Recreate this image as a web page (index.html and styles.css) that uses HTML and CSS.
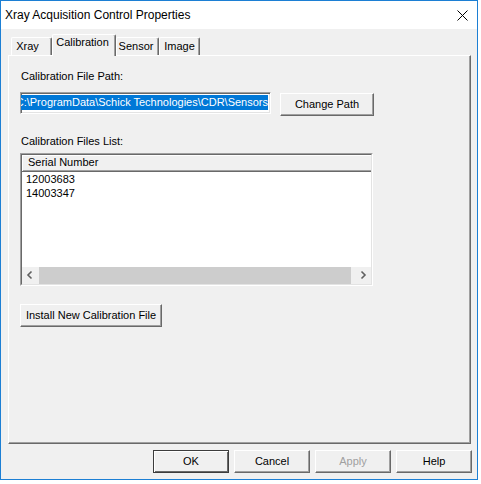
FILE: index.html
```html
<!DOCTYPE html>
<html>
<head>
<meta charset="utf-8">
<link rel="stylesheet" href="styles.css">
</head>
<body>
<div class="window">
  <div class="titlebar">
    <span class="title">Xray Acquisition Control Properties</span>
    <svg class="close" width="11" height="11" viewBox="0 0 11 11"><path d="M0.5 0.5 L10.5 10.5 M10.5 0.5 L0.5 10.5" stroke="#000" stroke-width="1" fill="none"/></svg>
  </div>
  <div class="client">
    <div class="tabs">
      <div class="tab t-xray">Xray</div>
      <div class="tab t-cal selected">Calibration</div>
      <div class="tab t-sensor">Sensor</div>
      <div class="tab t-image">Image</div>
    </div>
    <div class="panel">
      <div class="label">Calibration File Path:</div>
      <div class="pathrow">
        <div class="textbox"><span class="seltext">C:\ProgramData\Schick Technologies\CDR\Sensors</span></div>
        <button class="btn change">Change Path</button>
      </div>
      <div class="label l2">Calibration Files List:</div>
      <div class="list">
        <div class="list-in">
          <div class="header"><span>Serial Number</span></div>
          <div class="items">
            <div class="item">12003683</div>
            <div class="item">14003347</div>
          </div>
          <div class="hscroll">
            <div class="arrow"><svg width="17" height="17" viewBox="0 0 17 17"><path d="M9.5 4.5 L6 8 L9.5 11.5" stroke="#606060" stroke-width="1.6" fill="none"/></svg></div>
            <div class="thumb"></div>
            <div class="arrow"><svg width="17" height="17" viewBox="0 0 17 17"><path d="M7.5 4.5 L11 8 L7.5 11.5" stroke="#606060" stroke-width="1.6" fill="none"/></svg></div>
          </div>
        </div>
      </div>
      <button class="btn install">Install New Calibration File</button>
    </div>
    <div class="actions">
      <button class="btn act default">OK</button>
      <button class="btn act">Cancel</button>
      <button class="btn act disabled">Apply</button>
      <button class="btn act">Help</button>
    </div>
  </div>
</div>
</body>
</html>
```
FILE: styles.css
```css
* { box-sizing: border-box; }
body {
  margin: 0;
  background: #fff;
  font-family: "Liberation Sans", Arial, sans-serif;
  font-size: 11px;
  color: #000;
}
.window {
  width: 478px;
  height: 480px;
  border: 1px solid #1c7fd4;
  background: #f0f0f0;
  display: flex;
  flex-direction: column;
}
.titlebar {
  height: 28px;
  background: #fff;
  display: flex;
  align-items: center;
  justify-content: space-between;
  padding: 0 9px 0 4px;
}
.title {
  font-size: 12px;
  line-height: 14px;
}
.close { display: block; }
.client {
  flex: 1;
  display: flex;
  flex-direction: column;
  padding: 5px 6px 0 7px;
}
.tabs {
  display: flex;
  align-items: flex-end;
  height: 21px;
  padding-left: 3px;
}
.tab {
  height: 18px;
  border: 1px solid;
  border-color: #fff #696969 transparent #fff;
  border-bottom: none;
  border-radius: 2px 2px 0 0;
  box-shadow: inset -1px 0 #a0a0a0;
  background: #f0f0f0;
  line-height: 13px;
  padding-top: 2px;
  text-align: center;
}
.t-xray { width: 41px; padding-right: 8px; }
.t-cal { width: 64px; padding-right: 3px; }
.t-sensor { width: 43px; padding-right: 3px; }
.t-image { width: 41px; }
.tab.selected {
  height: 22px;
  margin-bottom: -1px;
  padding-top: 1px;
  position: relative;
  z-index: 1;
}
.panel {
  height: 389px;
  border: 1px solid;
  border-color: #fff #696969 #696969 #fff;
  box-shadow: inset -1px -1px #a0a0a0;
  padding: 14px 0 0 11px;
}
.label {
  line-height: 13px;
  height: 13px;
  margin-left: 1px;
}
.l2 { margin-top: 19px; }
.pathrow {
  display: flex;
  align-items: flex-start;
  margin-top: 9px;
}
.textbox {
  width: 251px;
  height: 22px;
  border: 1px solid;
  border-color: #a0a0a0 #fff #fff #a0a0a0;
  box-shadow: inset 1px 1px #696969, inset -1px -1px #e3e3e3;
  background: #fff;
  overflow: hidden;
  display: flex;
  justify-content: flex-end;
  align-items: flex-start;
  padding: 2px 2px 0 0;
}
.seltext {
  background: #0078d7;
  color: #fff;
  white-space: nowrap;
  line-height: 15px;
  height: 15px;
  flex-shrink: 0;
}
.btn {
  font-family: "Liberation Sans", Arial, sans-serif;
  font-size: 11px;
  color: #000;
  background: #f0f0f0;
  border: 1px solid;
  border-color: #fff #696969 #696969 #fff;
  box-shadow: inset -1px -1px #a0a0a0;
  padding: 0;
  margin: 0;
  height: 23px;
  line-height: 13px;
}
.change {
  width: 94px;
  margin-left: 9px;
  margin-top: 1px;
}
.list {
  margin-top: 5px;
  width: 353px;
  height: 133px;
  border: 1px solid;
  border-color: #a0a0a0 #fff #fff #a0a0a0;
}
.list-in {
  height: 100%;
  border: 1px solid;
  border-color: #696969 #e3e3e3 #e3e3e3 #696969;
  background: #fff;
  display: flex;
  flex-direction: column;
}
.header {
  height: 17px;
  background: #f0f0f0;
  border-bottom: 1px solid #696969;
  box-shadow: inset 1px 1px #fff, inset 0 -1px #a0a0a0;
  padding: 1px 0 0 6px;
  line-height: 13px;
}
.items {
  flex: 1;
  padding: 0 0 0 4px;
}
.item {
  line-height: 14px;
  height: 14px;
}
.hscroll {
  height: 17px;
  background: #f0f0f0;
  display: flex;
}
.arrow {
  width: 17px;
  height: 17px;
}
.arrow svg { display: block; }
.thumb {
  flex: 1;
  background: #cdcdcd;
  margin-right: 3px;
}
.install {
  width: 142px;
  margin-top: 18px;
}
.actions {
  display: flex;
  justify-content: flex-end;
  gap: 5px;
  margin-top: 6px;
  margin-right: -1px;
}
.act { width: 76px; }
.act.default {
  border: 1px solid #3c3c3c;
  box-shadow: inset 1px 1px #fff, inset -1px -1px #696969;
}
.act.disabled { color: #a0a0a0; }
```
